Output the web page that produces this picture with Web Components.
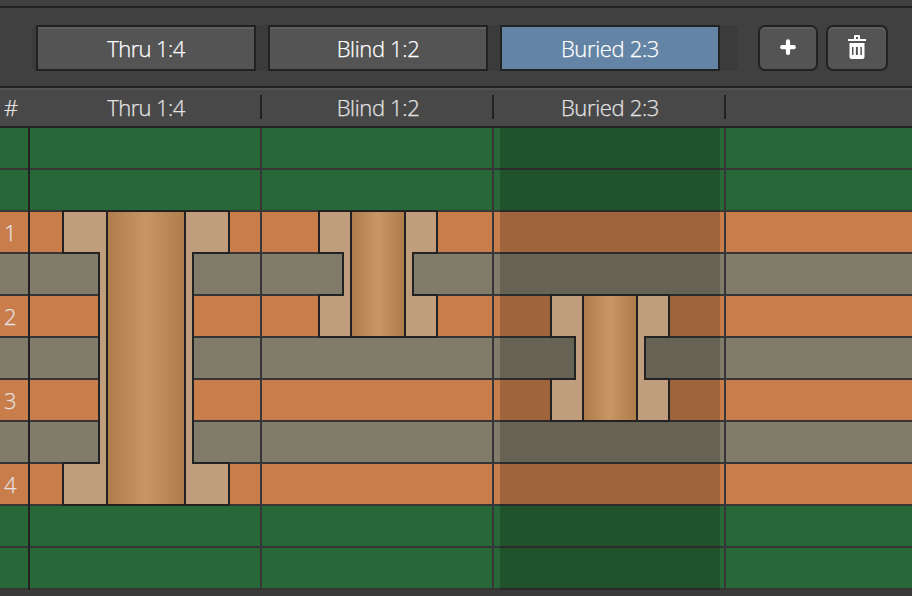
<!DOCTYPE html>
<html lang="en"><head><meta charset="utf-8"><title>Via types</title>
<style>
html,body{margin:0;height:100%;overflow:hidden;background:#3b3a3a}
body{font:300 22px/30px "Open Sans","Noto Sans",sans-serif;color:#fff;-webkit-text-stroke:.25px currentColor}
</style></head><body>
<via-manager></via-manager>
<script>
const define=(name,markup)=>customElements.define(name,class extends HTMLElement{
  connectedCallback(){
    if(this.shadowRoot)return;
    this.attachShadow({mode:'open'}).innerHTML=typeof markup==='function'?markup(this):markup;
  }
});

define('via-tab',`<style>
:host{box-sizing:border-box;width:220px;height:46px;border:2px solid #222;background:#545454;box-shadow:inset 0 2px #5f5f5f;display:flex;justify-content:center;padding-top:6px;line-height:30px;white-space:nowrap}
:host([selected]){background:#6384a4;box-shadow:none}
span{letter-spacing:var(--track,0)}
</style><span><slot></slot></span>`);

define('icon-button',`<style>
:host{box-sizing:border-box;width:60px;height:46px;border:2px solid #222;border-radius:7px;background:#545454;box-shadow:inset 0 2px #5f5f5f;display:flex}
:host([wide]){width:62px}
</style><slot></slot>`);

define('via-toolbar',`<style>
:host{display:flex;box-sizing:border-box;height:82px;padding:17px 0 0 32px;border-top:2px solid #222;border-bottom:2px solid #222;background:#404040}
.group{display:flex;gap:12px;box-sizing:border-box;width:706px;height:46px;padding-left:4px;background:#3b3b3b;border-radius:6px;margin-right:20px}
.actions{display:flex;gap:8px}
svg{display:block}
</style>
<div class="group">
<via-tab style="--track:-.6px">Thru 1:4</via-tab><via-tab style="--track:-.35px">Blind 1:2</via-tab><via-tab selected style="--track:-.34px">Buried 2:3</via-tab>
</div>
<div class="actions">
<icon-button><svg width="56" height="42" viewBox="760 27 56 42"><path d="M788 41.4V53M782.2 47.2H793.8" stroke="#fff" stroke-width="4.2" stroke-linecap="round"/></svg></icon-button>
<icon-button wide><svg width="58" height="42" viewBox="828 27 58 42" fill="#fff"><path fill-rule="evenodd" d="M848 39h6v-3q0-1 1-1h4q1 0 1 1v3h6v2h-18zM856 37v2h2v-2z"/><path fill-rule="evenodd" d="M849.5 43h15v14q0 2-2 2h-11q-2 0-2-2zM852 47v8h1.5v-8zm3.9 0v8h2v-8zm4.5 0v8h1.5v-8z"/></svg></icon-button>
</div>`);

define('stack-header',`<style>
:host{display:grid;grid-template-columns:30px repeat(3,232px) 1fr;box-sizing:border-box;height:40px;border-top:2px solid #525252;border-bottom:2px solid #222;background:#484848;color:#e2e2e2;padding-top:5px}
span{height:24px;box-sizing:border-box;border-right:2px solid #222;padding-left:2px;text-align:center;line-height:24px;white-space:nowrap;letter-spacing:var(--track,0)}
span.index{border:0;text-align:left;padding-left:4px}
span.rest{border:0}
</style><span class="index">#</span><span style="--track:-.6px">Thru 1:4</span><span style="--track:-.35px">Blind 1:2</span><span style="--track:-.34px">Buried 2:3</span><span class="rest"></span>`);

define('stack-layer',el=>`<style>
:host{display:grid;grid-template-columns:30px repeat(3,232px) 1fr;height:40px;border-bottom:2px solid #363636;background:#286838}
:host([kind=copper]){background:#c87d4b}
:host([kind=core]){background:#817c69}
i{border-right:2px solid #363636}i:last-child{border:0}
b{box-sizing:border-box;height:42px;border-right:2px solid #222;font-weight:300;color:#e4e0e0;padding-left:4px;line-height:40px}
</style><b>${el.getAttribute('label')||''}</b><i></i><i></i><i></i><i></i>`);

// Vias are placed freely over the layer grid.
const via=(o,i,b,b2,i2,o2,top,bottom)=>`<path d="M${o} ${top}H${o2}V${top+42}H${i2}V${bottom-42}H${o2}V${bottom}H${o}V${bottom-42}H${i}V${top+42}H${o}Z" fill="#c09d7c" stroke="#222" stroke-width="2"/><path d="M${b} ${top}H${b2}V${bottom}H${b}Z" fill="url(#barrel)" stroke="#222" stroke-width="2"/>`;

define('layer-stack',()=>{
  const layers=['','','copper:1','core','copper:2','core','copper:3','core','copper:4','',''];
  return `<style>
:host{display:block;position:relative;height:462px}
svg{position:absolute;left:0;top:0}
</style>${layers.map(x=>{const [k,n='']=x.split(':');return `<stack-layer kind="${k}" label="${n}"></stack-layer>`}).join('')}
<svg width="912" height="462" viewBox="0 128 912 462"><defs><linearGradient id="barrel"><stop offset="0" stop-color="#ad7c49"/><stop offset=".5" stop-color="#c89665"/><stop offset="1" stop-color="#ad7c49"/></linearGradient></defs>
<path d="M500 128h220v462H500z" fill="#000" opacity=".2"/>
${via(63,99,107,185,193,229,211,505)}${via(319,343,351,405,413,437,211,337)}${via(551,575,583,637,645,669,295,421)}</svg>`;
});

define('via-manager',`<style>:host{display:flex;flex-direction:column;width:912px;height:596px;background:#3b3a3a}.lead{height:6px;background:#404040}</style>
<div class="lead"></div><via-toolbar></via-toolbar><stack-header></stack-header><layer-stack></layer-stack>`);
</script>
</body></html>
